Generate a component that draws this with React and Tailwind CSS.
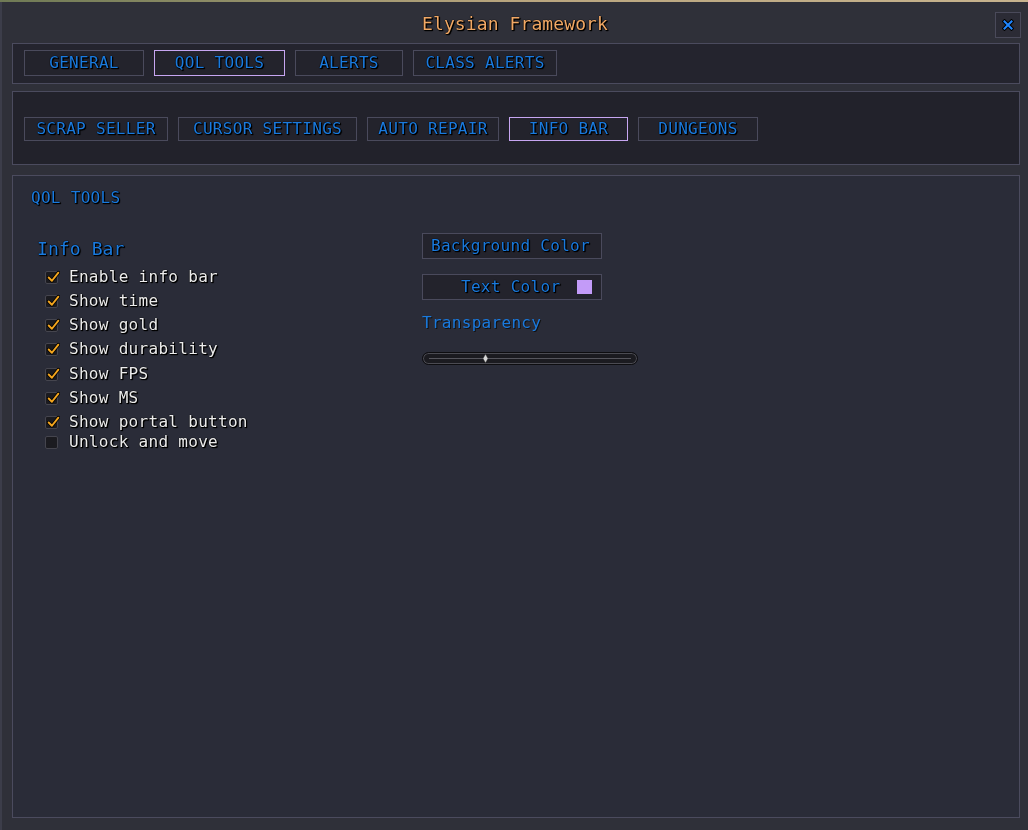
import React from "react";

const mono = "font-['DejaVu_Sans_Mono',monospace]";
const shadow = "drop-shadow-[1px_1px_0px_#000] [text-shadow:0_0_1px_#000,0_0_1px_#000]";
const blue = `${mono} ${shadow} text-[16px] tracking-[0.3px] text-[#1a7ade] leading-none`;

function Tab({ label, w, selected, h = "h-[26px]" }) {
  return (
    <div
      className={`${h} flex items-center justify-center border bg-[#23232c] ${selected ? "border-[#c7a6f2]" : "border-[#4a4a5c]"}`}
      style={{ width: w }}
    >
      <span className={blue}>{label}</span>
    </div>
  );
}

function Check({ checked, label, extra = "" }) {
  return (
    <div className={`flex items-center h-[24px] ${extra}`}>
      <div className="w-[13px] h-[13px] rounded-[2px] bg-[#1b1b20] border border-[#45454e] relative mr-[11px]">
        {checked && (
          <svg viewBox="0 0 13 13" className="absolute left-0 top-[-2px] w-[14px] h-[14px]">
            <path d="M2.5 7 L5.5 10 L11.5 2.5" fill="none" stroke="#000" strokeWidth="3.2" strokeLinecap="round" strokeLinejoin="round" />
            <path d="M2.5 7 L5.5 10 L11.5 2.5" fill="none" stroke="#f3a51e" strokeWidth="1.8" strokeLinecap="round" strokeLinejoin="round" />
          </svg>
        )}
      </div>
      <span className={`${mono} ${shadow} text-[16px] tracking-[0.3px] text-[#ececec] leading-none`}>{label}</span>
    </div>
  );
}

export default function App() {
  return (
    <div className="w-[1028px] h-[830px] bg-gradient-to-r from-[#6f7a55] via-[#b9a57e] to-[#c7b38e] overflow-hidden">
      <div className="mt-[2px] h-[828px] bg-[#2f3039] border-l-2 border-[#3c3d4a] flex flex-col px-[10px]">
        {/* Title bar */}
        <div className="relative h-[41px] flex items-center justify-center">
          <span className={`${mono} ${shadow} text-[18px] tracking-[0.1px] text-[#f1a865] leading-none mt-[2px]`}>Elysian Framework</span>
          <div className="absolute right-[-3px] top-[10px] w-[26px] h-[26px] border border-[#4a4a5a] bg-[#2b2b35] flex items-center justify-center">
            <svg viewBox="0 0 12 12" className="w-[12px] h-[12px]">
              <path d="M2.5 2.5 L9.5 9.5 M9.5 2.5 L2.5 9.5" stroke="#000" strokeWidth="4" strokeLinecap="square" />
              <path d="M2.5 2.5 L9.5 9.5 M9.5 2.5 L2.5 9.5" stroke="#1f86ff" strokeWidth="2" strokeLinecap="square" />
            </svg>
          </div>
        </div>

        {/* Main tabs */}
        <div className="h-[41px] mr-[-2px] border border-[#4b4b5e] bg-[#24242e] flex items-start gap-[10px] pl-[11px] pt-[6px]">
          <Tab label="GENERAL" w={120} />
          <Tab label="QOL TOOLS" w={131} selected />
          <Tab label="ALERTS" w={108} />
          <Tab label="CLASS ALERTS" w={144} />
        </div>

        {/* Sub tabs */}
        <div className="mt-[7px] h-[74px] mr-[-2px] border border-[#4b4b5e] bg-[#22222b] flex items-center gap-[10px] pl-[11px] pt-[1px]">
          <Tab label="SCRAP SELLER" w={144} h="h-[24px]" />
          <Tab label="CURSOR SETTINGS" w={179} h="h-[24px]" />
          <Tab label="AUTO REPAIR" w={132} h="h-[24px]" />
          <Tab label="INFO BAR" w={119} h="h-[24px]" selected />
          <Tab label="DUNGEONS" w={120} h="h-[24px]" />
        </div>

        {/* Content */}
        <div className="mt-[10px] h-[643px] mr-[-2px] border border-[#4b4b5e] bg-[#2a2c38] px-[18px] pt-[12px]">
          <div className={`${mono} ${shadow} text-[16px] tracking-[0.3px] text-[#1a7ade] leading-[20px]`}>QOL TOOLS</div>
          <div className="flex mt-[25px]">
            <div className="w-[391px] pl-[6px]">
              <div className={`${mono} ${shadow} text-[18px] tracking-[0.1px] text-[#1a7ade] leading-[24px] mt-[4px]`}>Info Bar</div>
              <div className="pl-[8px] mt-[4px] flex flex-col">
                <Check checked label="Enable info bar" />
                <Check checked label="Show time" />
                <Check checked label="Show gold" />
                <Check checked label="Show durability" />
                <Check checked label="Show FPS" extra="mt-[1px]" />
                <Check checked label="Show MS" />
                <Check checked label="Show portal button" />
                <div className="-mt-[4px]">
                  <Check label="Unlock and move" />
                </div>
              </div>
            </div>
            <div className="flex flex-col">
              <div className="w-[180px] h-[26px] border border-[#4a4a5c] bg-[#23232c] flex items-center pl-[8px]">
                <span className={blue}>Background Color</span>
              </div>
              <div className="mt-[15px] w-[180px] h-[26px] border border-[#4a4a5c] bg-[#23232c] flex items-center pl-[38px]">
                <span className={blue}>Text Color</span>
                <div className="ml-[17px] w-[15px] h-[14px] bg-[#c39bf8]" />
              </div>
              <div className={`${mono} mt-[13px] text-[16px] tracking-[0.3px] text-[#1a7ade] leading-[20px] drop-shadow-[1px_1px_0px_#111]`}>Transparency</div>
              <div className="mt-[19px] relative w-[216px] h-[13px] rounded-full bg-[#1b1b20] border border-[#0d0d10] shadow-[inset_0_0_0_1px_#4b4b52]">
                <div className="absolute left-[6px] right-[6px] top-[5px] h-[1px] bg-[#55555c]" />
                <div className="absolute left-[60px] top-[1px] w-[5px] h-[9px]">
                  <svg viewBox="0 0 5 9" className="w-[5px] h-[9px]">
                    <path d="M2.5 0 L5 4.5 L2.5 9 L0 4.5 Z" fill="#d8d8d8" stroke="#222" strokeWidth="0.5" />
                  </svg>
                </div>
              </div>
            </div>
          </div>
        </div>
      </div>
    </div>
  );
}
